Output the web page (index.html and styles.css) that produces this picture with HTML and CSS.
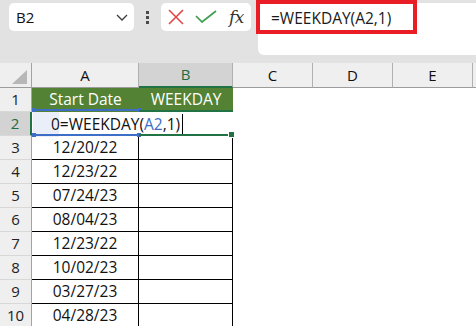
FILE: index.html
```html
<!DOCTYPE html>
<html lang="en">
<head>
  <meta charset="UTF-8">
  <meta name="viewport" content="width=device-width, initial-scale=1.0">
  <title>WEEKDAY</title>
  <link rel="stylesheet" href="styles.css">
</head>
<body>

  <!-- name box + formula bar -->
  <div class="toolbar">
    <div class="namebox">
      <span>B2</span>
      <svg width="12" height="7" viewBox="0 0 12 7"><polyline points="1,1 6,6 11,1" fill="none" stroke="#3a3a3a" stroke-width="1.3"/></svg>
    </div>
    <div class="grip"><i></i><i></i><i></i></div>
    <div class="fnbox">
      <svg class="cancel" width="16" height="16" viewBox="0 0 16 16"><path d="M1 1L15 15M15 1L1 15" fill="none" stroke="#e2474a" stroke-width="1.6"/></svg>
      <svg class="enter" width="22" height="13" viewBox="0 0 22 13"><polyline points="1,6 7,12 21,1" fill="none" stroke="#3d9f4d" stroke-width="1.7"/></svg>
      <span class="fx">fx</span>
    </div>
    <div class="formula"><span>=WEEKDAY(A2,1)</span></div>
    <div class="mark"></div>
  </div>

  <!-- the grid -->
  <div class="sheet">
    <div class="corner"><svg width="15" height="14" viewBox="0 0 15 14"><polygon points="15,0 15,14 0,14" fill="#b7b7b7"/></svg></div>
    <div class="ch">A</div>
    <div class="ch sel">B</div>
    <div class="ch">C</div>
    <div class="ch">D</div>
    <div class="ch">E</div>
    <div class="ch last"></div>

    <div class="rh">1</div>
    <div class="hd">Start Date</div>
    <div class="hd">WEEKDAY</div>
    <div></div><div></div><div></div><div></div>

    <div class="rh sel">2</div>
    <div class="edit"><span class="typed">0=WEEKDAY(<b>A2</b>,1)<i class="caret"></i></span></div>
    <div></div>
    <div></div><div></div><div></div><div></div>

    <div class="rh">3</div>
    <div class="c">12/20/22</div><div class="c"></div>
    <div></div><div></div><div></div><div></div>

    <div class="rh">4</div>
    <div class="c">12/23/22</div><div class="c"></div>
    <div></div><div></div><div></div><div></div>

    <div class="rh">5</div>
    <div class="c">07/24/23</div><div class="c"></div>
    <div></div><div></div><div></div><div></div>

    <div class="rh">6</div>
    <div class="c">08/04/23</div><div class="c"></div>
    <div></div><div></div><div></div><div></div>

    <div class="rh">7</div>
    <div class="c">12/23/22</div><div class="c"></div>
    <div></div><div></div><div></div><div></div>

    <div class="rh">8</div>
    <div class="c">10/02/23</div><div class="c"></div>
    <div></div><div></div><div></div><div></div>

    <div class="rh">9</div>
    <div class="c">03/27/23</div><div class="c"></div>
    <div></div><div></div><div></div><div></div>

    <div class="rh">10</div>
    <div class="c">04/28/23</div><div class="c"></div>
    <div></div><div></div><div></div><div></div>

    <!-- selection overlays -->
    <div class="ref-a2"><i class="h tl"></i><i class="h tr"></i><i class="h bl"></i><i class="h br"></i></div>
    <div class="sel-b2"><i class="fill"></i></div>
  </div>

</body>
</html>
```

FILE: styles.css
```css
body {
  margin: 0;
  width: 476px;
  height: 326px;
  overflow: hidden;
  background: #fff;
  font-family: "Open Sans", sans-serif;
  color: #111;
}

/* ---------- toolbar ---------- */

.toolbar {
  position: relative;
  display: flex;
  align-items: flex-start;
  height: 63px;
  box-sizing: border-box;
  padding: 3px 0 0 9px;
  background: #e2e2e2;
}

.namebox {
  display: flex;
  align-items: center;
  justify-content: space-between;
  width: 125px;
  height: 28px;
  box-sizing: border-box;
  padding: 0 6px 0 7px;
  background: #fff;
  border-radius: 5px;
  font-size: 15px;
}

.grip {
  display: flex;
  flex-direction: column;
  align-items: center;
  gap: 2px;
  width: 27px;
  padding-top: 8px;
}

.grip i {
  width: 3px;
  height: 3px;
  background: #4a4a4a;
}

.fnbox {
  display: flex;
  align-items: center;
  width: 90px;
  height: 28px;
  box-sizing: border-box;
  padding-left: 7px;
  background: #fff;
  border-radius: 5px;
}

.fnbox .cancel {
  margin-right: 11px;
}

.fnbox .enter {
  margin-right: 12px;
  margin-top: -1px;
}

.fx {
  font-family: "DejaVu Serif", serif;
  font-style: italic;
  font-size: 17px;
  color: #333;
  letter-spacing: -0.5px;
}

.formula {
  flex: 1;
  height: 52px;
  margin-left: 7px;
  box-sizing: border-box;
  padding: 5px 0 0 13px;
  background: #fff;
  border-radius: 6px 0 0 6px;
  font-size: 15.5px;
  line-height: 20px;
  color: #1a1a1a;
}

.mark {
  position: absolute;
  left: 256px;
  top: 0;
  width: 161px;
  height: 34px;
  box-sizing: border-box;
  border: 4px solid #e81d25;
}

/* ---------- sheet ---------- */

.sheet {
  position: relative;
  display: grid;
  grid-template-columns: 32px 107px 94px 80px 80px 80px 1fr;
  grid-template-rows: 25px repeat(10, 24px);
  font-size: 15.5px;
}

.sheet > div {
  box-sizing: border-box;
}

.corner {
  display: flex;
  justify-content: flex-end;
  align-items: flex-end;
  padding: 0 4px 3px 0;
  background: #efefef;
  border-right: 1px solid #a3a3a3;
  border-bottom: 1px solid #9c9c9c;
}

.corner svg {
  display: block;
}

.ch {
  background: #efefef;
  border-right: 1px solid #b0b0b0;
  border-bottom: 1px solid #9c9c9c;
  text-align: center;
  line-height: 24px;
  font-size: 15px;
  color: #111;
}

.ch.sel {
  background: #d3d3d3;
  color: #1e6c41;
  border-bottom: 2px solid #217346;
  line-height: 23px;
}

.ch.last {
  border-right: none;
}

.rh {
  background: #efefef;
  border-right: 1px solid #a3a3a3;
  border-bottom: 1px solid #d8d8d8;
  text-align: center;
  line-height: 23px;
  font-size: 15px;
  color: #222;
}

.rh.sel {
  background: #d3d3d3;
  color: #1e6c41;
  border-right: 2px solid #217346;
}

.hd {
  background: #548235;
  color: #fff;
  text-align: center;
  line-height: 23px;
}

.c {
  border-right: 1px solid #000;
  border-bottom: 1px solid #000;
  text-align: center;
  line-height: 23px;
}

.edit {
  position: relative;
  white-space: nowrap;
  line-height: 24px;
}

.edit::before {
  content: "";
  position: absolute;
  left: 1px;
  top: 0;
  width: 26px;
  height: 25px;
  background: #e9eef8;
}

.typed {
  position: relative;
  display: inline-flex;
  align-items: center;
  padding-left: 19px;
}

.typed b {
  font-weight: normal;
  color: #3a6cc7;
}

.caret {
  display: inline-block;
  width: 1px;
  height: 21px;
  margin-left: 2px;
  background: #000;
}

/* A2 reference box */
.ref-a2 {
  position: absolute;
  left: 32px;
  top: 46px;
  width: 107px;
  height: 27px;
  box-sizing: border-box;
  border-top: 2px solid #3d6fc9;
  border-bottom: 2px solid #3d6fc9;
}

.h {
  position: absolute;
  width: 4px;
  height: 4px;
  background: #3d6fc9;
}

.h.tl { left: 0; top: -3px; }
.h.tr { right: -2px; top: -3px; }
.h.bl { left: 0; bottom: -3px; }
.h.br { right: -2px; bottom: -3px; }

/* B2 active cell */
.sel-b2 {
  position: absolute;
  left: 139px;
  top: 47px;
  width: 94px;
  height: 26px;
  box-sizing: border-box;
  border-top: 2px solid #217346;
  border-bottom: 2px solid #217346;
}

.sel-b2 .fill {
  position: absolute;
  right: -2px;
  bottom: -4px;
  width: 5px;
  height: 5px;
  background: #217346;
  border: 1px solid #fff;
}
```
